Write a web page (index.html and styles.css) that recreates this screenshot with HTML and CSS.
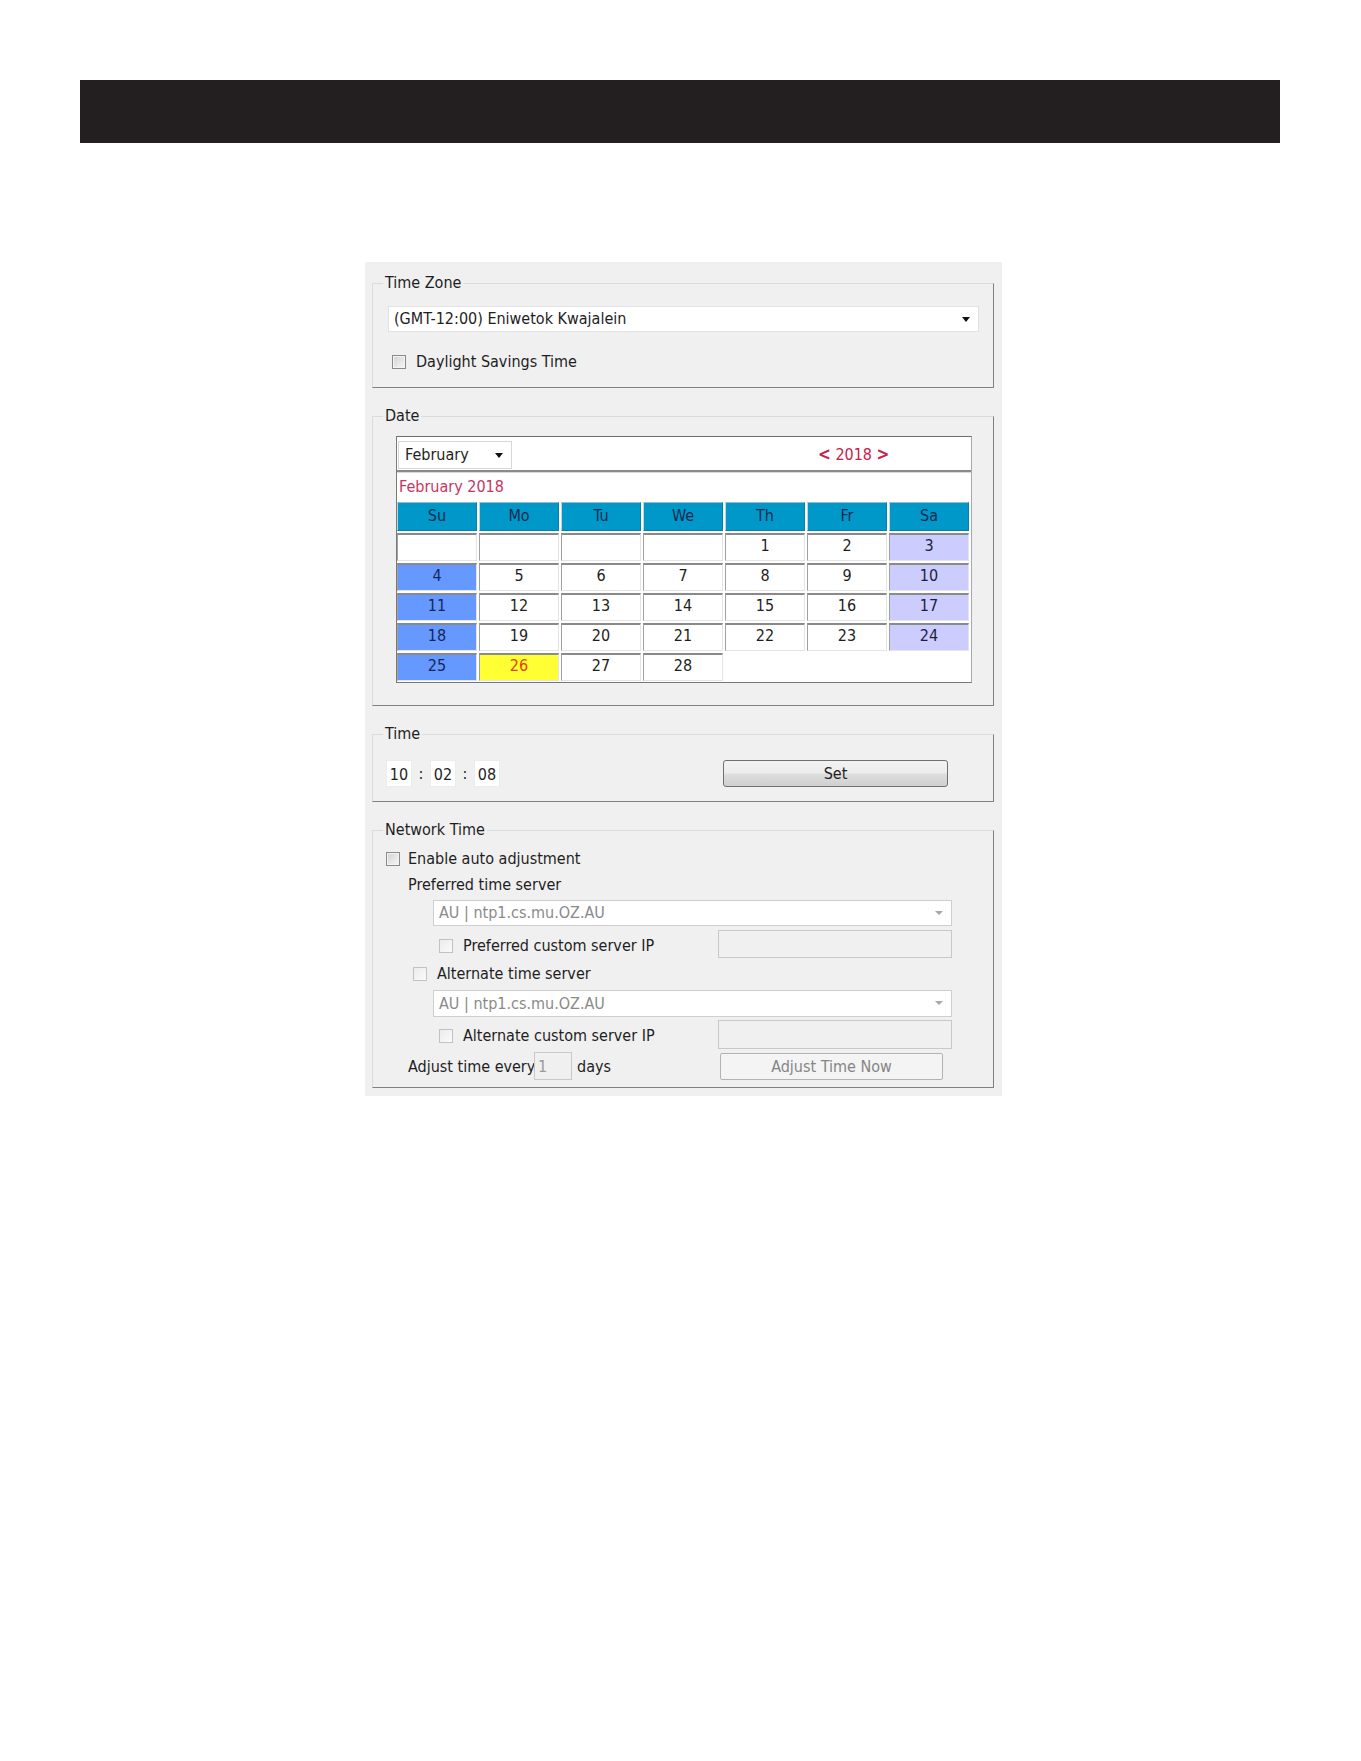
FILE: index.html
```html
<!DOCTYPE html>
<html>
<head>
<meta charset="utf-8">
<link rel="stylesheet" href="styles.css">
</head>
<body>
<div class="topbar"></div>
<div class="panel">
  <fieldset class="group tz">
    <legend>Time Zone</legend>
    <div class="select tz-select"><span>(GMT-12:00) Eniwetok Kwajalein</span><span class="arrow"></span></div>
    <label class="check dst"><span class="box"></span>Daylight Savings Time</label>
  </fieldset>

  <fieldset class="group date">
    <legend>Date</legend>
    <div class="calendar">
      <div class="cal-top">
        <div class="month-select"><span>February</span><span class="arrow"></span></div>
        <div class="year-nav"><b>&lt;</b> 2018 <b>&gt;</b></div>
      </div>
      <div class="cal-title">February 2018</div>
      <div class="cal-grid">
        <div class="hd">Su</div><div class="hd">Mo</div><div class="hd">Tu</div><div class="hd">We</div><div class="hd">Th</div><div class="hd">Fr</div><div class="hd">Sa</div>
        <div class="d"></div><div class="d"></div><div class="d"></div><div class="d"></div><div class="d">1</div><div class="d">2</div><div class="d sat">3</div>
        <div class="d sun">4</div><div class="d">5</div><div class="d">6</div><div class="d">7</div><div class="d">8</div><div class="d">9</div><div class="d sat">10</div>
        <div class="d sun">11</div><div class="d">12</div><div class="d">13</div><div class="d">14</div><div class="d">15</div><div class="d">16</div><div class="d sat">17</div>
        <div class="d sun">18</div><div class="d">19</div><div class="d">20</div><div class="d">21</div><div class="d">22</div><div class="d">23</div><div class="d sat">24</div>
        <div class="d sun">25</div><div class="d today">26</div><div class="d">27</div><div class="d">28</div>
      </div>
    </div>
  </fieldset>

  <fieldset class="group time">
    <legend>Time</legend>
    <div class="time-row">
      <div class="tbox">10</div><span class="colon">:</span><div class="tbox">02</div><span class="colon">:</span><div class="tbox">08</div>
      <div class="btn set">Set</div>
    </div>
  </fieldset>

  <fieldset class="group net">
    <legend>Network Time</legend>
    <label class="check enable"><span class="box"></span>Enable auto adjustment</label>
    <div class="label pref">Preferred time server</div>
    <div class="select dis srv"><span>AU | ntp1.cs.mu.OZ.AU</span><span class="arrow"></span></div>
    <div class="custom-row">
      <label class="check dis custom"><span class="box"></span>Preferred custom server IP</label>
      <div class="ip"></div>
    </div>
    <label class="check dis alt"><span class="box"></span>Alternate time server</label>
    <div class="select dis srv srv2"><span>AU | ntp1.cs.mu.OZ.AU</span><span class="arrow"></span></div>
    <div class="custom-row row2">
      <label class="check dis custom"><span class="box"></span>Alternate custom server IP</label>
      <div class="ip"></div>
    </div>
    <div class="adjust-row">
      <span class="adj-label">Adjust time every</span><div class="days">1</div><span class="days-label">days</span>
      <div class="btn now">Adjust Time Now</div>
    </div>
  </fieldset>
</div>
</body>
</html>
```

FILE: styles.css
```css
html, body {
  margin: 0;
  padding: 0;
  background: #ffffff;
}
body {
  font-family: "DejaVu Sans Condensed", "DejaVu Sans", "Noto Sans", sans-serif;
  font-size: 16px;
  color: #1e1e1e;
}
.topbar {
  margin: 80px 0 0 80px;
  width: 1200px;
  height: 63px;
  background: #231f20;
}
.panel {
  margin: 119px 0 0 365px;
  width: 637px;
  box-sizing: border-box;
  background: #f0f0f0;
  padding: 12px 8px 8px 7px;
}
.group {
  margin: 0;
  padding: 0 15px 0 13px;
  border: 1px solid;
  border-color: #dcdcdc #808080 #808080 #dcdcdc;
  min-width: 0;
}
.group + .group {
  margin-top: 19px;
}
.group legend {
  margin-left: -3px;
  padding: 0 2px;
  line-height: 18px;
  height: 18px;
  font-size: 16px;
}
.select {
  position: relative;
  background: #ffffff;
  border: 1px solid #e2e2e2;
  height: 24px;
  line-height: 24px;
  padding-left: 5px;
  box-sizing: content-box;
}
.arrow {
  position: absolute;
  right: 8px;
  top: 10px;
  width: 0;
  height: 0;
  border-left: 4px solid transparent;
  border-right: 4px solid transparent;
  border-top: 5px solid #111;
}
.tz-select {
  margin: 14px 0 0 2px;
  width: 584px;
}
.check {
  display: flex;
  align-items: center;
  height: 20px;
  line-height: 20px;
}
.box {
  width: 12px;
  height: 12px;
  border: 1px solid #8a8a8a;
  background: linear-gradient(135deg, #d2d2d2, #f7f7f7);
  box-shadow: inset 0 0 0 1px #f4f4f4;
  margin-right: 9px;
  flex: none;
}
.dst {
  margin: 20px 0 15px 6px;
}
.dst .box {
  margin-right: 10px;
}

/* calendar */
.date {
  padding-bottom: 22px;
}
.calendar {
  margin: 11px 0 0 10px;
  width: 576px;
  box-sizing: border-box;
  background: #ffffff;
  border: 1px solid;
  border-color: #6f6f6f #a8a8a8 #777777 #7a7a7a;
  padding-bottom: 1px;
}
.cal-top {
  display: flex;
  align-items: center;
  height: 33px;
  border-bottom: 2px solid #8a8a8a;
  position: relative;
}
.month-select {
  position: relative;
  margin: 2px 0 0 1px;
  width: 106px;
  height: 26px;
  line-height: 26px;
  padding-left: 6px;
  border: 1px solid #d8d8d8;
  background: #fff;
}
.month-select .arrow {
  right: 8px;
  top: 11px;
}
.year-nav {
  margin-left: 306px;
  color: #c8204c;
  font-size: 16px;
}
.year-nav b {
  font-weight: bold;
  font-size: 17px;
}
.cal-title {
  height: 28px;
  line-height: 28px;
  color: #c73562;
  padding-left: 2px;
  border-top: 1px solid #d8d8d8;
}
.cal-grid {
  display: grid;
  grid-template-columns: repeat(7, 80px);
  grid-template-rows: 29px repeat(5, 28px);
  column-gap: 2px;
  row-gap: 2.1px;
  padding: 1px 0 0 0;
}
.cal-grid > div {
  box-sizing: border-box;
  text-align: center;
  line-height: 22px;
  border-top: 2px solid #8a8a8a;
  border-left: 1px solid #a0a0a0;
  border-right: 1px solid #e4e4e4;
  border-bottom: 1px solid #e4e4e4;
}
.cal-grid .hd {
  background: #0097c9;
  color: #112b4e;
  line-height: 26px;
  border-top: 1px solid #9fb8c4;
  border-left: 1px solid #c0d6de;
  border-right: 1px solid #0a7fa8;
  border-bottom: 1px solid #0a7fa8;
}
.cal-grid .d {
  background: #ffffff;
}
.cal-grid .sun {
  background: #6699ff;
  color: #14275a;
}
.cal-grid .sat {
  background: #ccccff;
  color: #1e1e40;
}
.cal-grid .today {
  background: #ffff33;
  color: #e2420c;
}

/* time */
.time {
  padding-bottom: 14px;
}
.time-row {
  display: flex;
  align-items: center;
  margin-top: 16px;
  height: 28px;
}
.tbox {
  width: 26px;
  height: 27px;
  line-height: 27px;
  text-align: center;
  background: #ffffff;
  border: 1px solid #ececec;
  box-sizing: border-box;
}
.colon {
  width: 18px;
  text-align: center;
}
.btn {
  box-sizing: border-box;
  text-align: center;
  border-radius: 3px;
}
.set {
  margin-left: 223px;
  width: 225px;
  height: 27px;
  line-height: 25px;
  border: 1px solid #707070;
  background: linear-gradient(#f3f3f3 0%, #ececec 48%, #dddddd 52%, #d0d0d0 100%);
}

/* network */
.net {
  padding-bottom: 7px;
}
.enable {
  margin-top: 10px;
}
.enable .box {
  margin-right: 8px;
}
.label {
  height: 20px;
  line-height: 20px;
}
.pref {
  margin: 6px 0 0 22px;
}
.dis {
  color: #8a8a8a;
}
.check.dis {
  color: #1e1e1e;
}
.check.dis .box {
  border-color: #c2c2c2;
  background: linear-gradient(135deg, #ececec, #fafafa);
  box-shadow: none;
}
.select.dis {
  border-color: #cfcfcf;
}
.select.dis .arrow {
  border-top-color: #a8a8a8;
  border-left-width: 4px;
  border-right-width: 4px;
  border-top-width: 4px;
}
.srv {
  margin: 5px 0 0 47px;
  width: 512px;
}
.srv2 {
  margin-top: 6px;
  height: 25px;
  line-height: 25px;
}
.custom-row {
  display: flex;
  align-items: center;
  margin: 4px 0 0 53px;
  height: 28px;
}
.row2 {
  margin-top: 3px;
  height: 29px;
}
.custom {
  width: 279px;
  padding-top: 3px;
}
.custom .box {
  margin-right: 10px;
}
.ip {
  width: 234px;
  height: 100%;
  box-sizing: border-box;
  border: 1px solid #c8c8c8;
  background: #f0f0f0;
}
.alt {
  margin: 6px 0 0 27px;
}
.alt .box {
  margin-right: 10px;
}
.adjust-row {
  display: flex;
  align-items: center;
  margin: 3px 0 0 22px;
  height: 28px;
}
.adj-label {
  width: 126px;
  white-space: nowrap;
}
.days {
  width: 38px;
  height: 28px;
  line-height: 28px;
  box-sizing: border-box;
  border: 1px solid #c8c8c8;
  padding-left: 3px;
  color: #9a9a9a;
}
.days-label {
  margin-left: 5px;
}
.now {
  margin-left: 109px;
  width: 223px;
  height: 27px;
  line-height: 25px;
  border: 1px solid #b3b3b3;
  background: #f4f4f4;
  color: #858585;
  border-radius: 2px;
}
```
